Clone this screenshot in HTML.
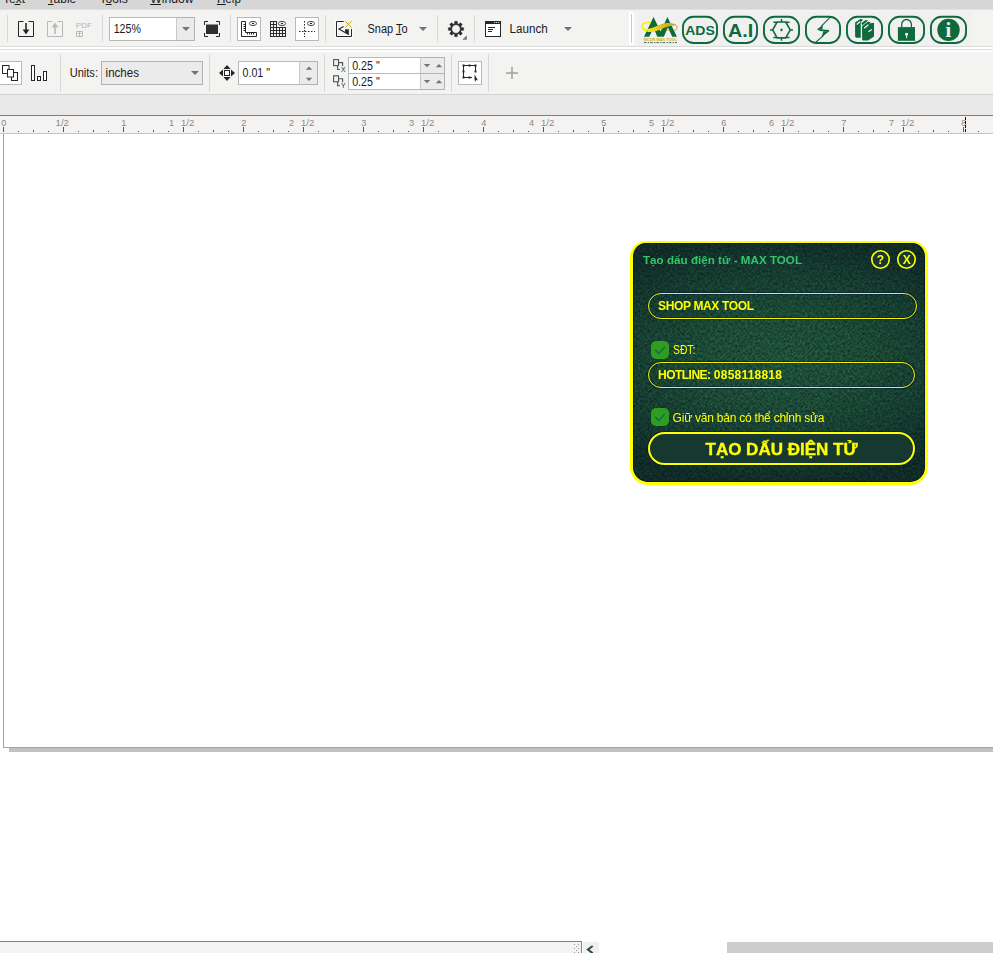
<!DOCTYPE html>
<html lang="vi"><head><meta charset="utf-8"><title>Tạo dấu điện tử - MAX TOOL</title>
<style>
html,body{margin:0;padding:0}
body{width:993px;height:953px;overflow:hidden;background:#fff;font-family:"Liberation Sans",sans-serif;color:#1a1a1a}
#app{position:relative;width:993px;height:953px;overflow:hidden;background:#fff}
#app div,#app span,#app svg{position:absolute;box-sizing:border-box}
svg text{font-family:"Liberation Sans",sans-serif}
.menubar{left:0;top:0;width:993px;height:9px;background:#d6d6d6}
.menuedge{left:0;top:9px;width:993px;height:1px;background:#dfdfde}
.tb1{left:0;top:10px;width:993px;height:36px;background:#f3f3f1}
.tb2{left:0;top:52px;width:993px;height:42px;background:#f3f3f1}
.ln{left:0;width:993px;height:1px}
.sep{width:1px;background:#d8d8d8}
.box{background:#fff;border:1px solid #b9b9b9}
.gbox{background:#ebebeb;border:1px solid #b3b3b3}
.band{left:0;top:95px;width:993px;height:20px;background:#e9e9e9}
.blue{left:0;top:115px;width:993px;height:1px;background:#0aa4ee}
.ruler{left:0;top:116px;width:993px;height:17px;background:#f4f3f1}
.rulerline{left:0;top:133px;width:993px;height:1px;background:#c6c6c6}
.page-left{left:3px;top:134px;width:1px;height:614px;background:#a3a3a3}
.page-bottom{left:3px;top:747px;width:990px;height:1px;background:#a3a3a3}
.page-shadow{left:9px;top:748px;width:984px;height:4px;background:#c1c1c1}
.tabs{left:0;top:941px;width:582px;height:12px;background:#f3f3f1;border-top:1px solid #7d8886;border-right:1px solid #7d8886}
.scrollbtn{left:583px;top:942px;width:16px;height:11px;background:#f0f0f0}
.thumb{left:727px;top:942px;width:266px;height:11px;background:#cdcdcd}
</style></head><body>
<div id="app">
<div class="menubar"></div><div class="menuedge"></div>
<div class="tb1"></div>
<div class="ln" style="top:46px;background:#dadada"></div><div class="ln" style="top:47px;height:2px;background:#fff"></div><div class="ln" style="top:49px;background:#dadada"></div><div class="ln" style="top:50px;height:2px;background:#fff"></div>
<div class="sep" style="left:7px;top:15px;height:27px"></div><div class="sep" style="left:102px;top:15px;height:27px"></div><div class="sep" style="left:230px;top:15px;height:27px"></div><div class="sep" style="left:325px;top:15px;height:27px"></div><div class="sep" style="left:437px;top:15px;height:27px"></div><div class="sep" style="left:474px;top:15px;height:27px"></div>
<div class="tb2"></div><div class="ln" style="top:94px;background:#d4d4d4"></div><div class="band"></div><div class="blue"></div>
<div class="sep" style="left:60px;top:54px;height:38px"></div><div class="sep" style="left:209px;top:54px;height:38px"></div><div class="sep" style="left:324px;top:54px;height:38px"></div><div class="sep" style="left:451px;top:54px;height:38px"></div><div class="sep" style="left:488px;top:54px;height:38px"></div>
<div class="ruler"></div><div class="rulerline"></div>
<div class="page-left"></div><div class="page-bottom"></div><div class="page-shadow"></div>
<div class="tabs"></div><div class="scrollbtn"></div><div class="thumb"></div>
<svg class="menu-text" style="left:0;top:0" width="993" height="10" viewBox="0 0 993 10"><text x="3" y="2.9" font-size="12" fill="#1a1a1a" textLength="22" lengthAdjust="spacingAndGlyphs">Text</text><text x="47.6" y="2.9" font-size="12" fill="#1a1a1a" textLength="28.6" lengthAdjust="spacingAndGlyphs">Table</text><text x="99.4" y="2.9" font-size="12" fill="#1a1a1a" textLength="28.3" lengthAdjust="spacingAndGlyphs">Tools</text><text x="150.2" y="2.9" font-size="12" fill="#1a1a1a" textLength="43.3" lengthAdjust="spacingAndGlyphs">Window</text><text x="216.9" y="2.9" font-size="12" fill="#1a1a1a" textLength="24" lengthAdjust="spacingAndGlyphs">Help</text><path d="M14.6 4.5H20.2 M48 4.5H53.6 M105.7 4.5H111.6 M150.2 4.5H160.9 M216.9 4.5H225.7" stroke="#1a1a1a" stroke-width="1" fill="none"/></svg>
<div class="box" style="left:109px;top:17px;width:86px;height:24px"></div><div class="gbox" style="left:176px;top:17px;width:19px;height:24px;border-left-color:#c9c9c9"></div><div class="box" style="left:237px;top:17px;width:24px;height:24px"></div><div class="box" style="left:295px;top:17px;width:24px;height:24px"></div>
<div style="left:629px;top:12px;width:5px;height:33px;background:#fff"></div><div style="left:631px;top:14px;width:1px;height:29px;background:#cbcbcb"></div><div style="left:638px;top:12px;width:334px;height:34px;background:#f0f0f0"></div>
<svg class="tb1-icons" style="left:0;top:10px" width="993" height="36" viewBox="0 10 993 36"><path d="M23.5 21.5H18.5V36.5H33.5V21.5H28.5" fill="none" stroke="#262626" stroke-width="1"/><path d="M26 23V32" stroke="#262626" stroke-width="1.6" fill="none"/><path d="M22.6 29.6H29.4L26 34.4Z" fill="#262626"/><path d="M52.5 21.5H47.5V36.5H62.5V21.5H57.5" fill="none" stroke="#b9b9b9" stroke-width="1"/><path d="M55 34V25" stroke="#b9b9b9" stroke-width="1.6" fill="none"/><path d="M51.6 27.4H58.4L55 22.6Z" fill="#b9b9b9"/><text x="75.8" y="27.6" font-size="7.2" fill="#b4b4b4" textLength="16" lengthAdjust="spacingAndGlyphs">PDF</text><path d="M76.5 31.5H82.5V36.5H76.5Z M79.5 36V32.5 M77.8 34L79.5 32.3L81.2 34" fill="none" stroke="#b9b9b9" stroke-width="1"/><text x="113.7" y="32.8" font-size="12" fill="#1a1a1a" textLength="27.3" lengthAdjust="spacingAndGlyphs">125%</text><path d="M182.0 27.0 L190.0 27.0 L186 31.0 Z" fill="#75717b"/><rect x="206" y="24.5" width="12" height="9.5" fill="#2f2f2f"/><path d="M204.5 25V21.5H208 M216 21.5H219.5V25 M219.5 33V36.5H216 M208 36.5H204.5V33" fill="none" stroke="#262626" stroke-width="1"/><path d="M241.5 21.5H245.5V32.5H256.5V36.5H241.5Z" fill="#fff" stroke="#262626" stroke-width="1"/><path d="M243.5 24.5H245 M243.5 26.5H245 M243.5 28.5H245 M243.5 30.5H245 M247.5 33V34.5 M249.5 33V34.5 M251.5 33V34.5 M253.5 33V34.5" stroke="#262626" stroke-width="1" fill="none"/><ellipse cx="253" cy="23.5" rx="3.6" ry="2.1" fill="#fdfdfd" stroke="#3a3a3a" stroke-width="0.9"/><ellipse cx="253" cy="23.5" rx="1.2" ry="0.8" fill="#222"/><path d="M270 21.5H277M270 24.5H277M270 27.5H286M270 30.5H286M270 33.5H286M270 36.5H286M270.5 21V37M273.5 21V37M276.5 21V37M279.5 27V37M282.5 27V37M285.5 27V37" fill="none" stroke="#2b2b2b" stroke-width="1"/><ellipse cx="282" cy="23.5" rx="3.6" ry="2.1" fill="#fdfdfd" stroke="#3a3a3a" stroke-width="0.9"/><ellipse cx="282" cy="23.5" rx="1.2" ry="0.8" fill="#222"/><path d="M304.5 21V37" stroke="#262626" stroke-width="1" stroke-dasharray="1.5 1.5" fill="none"/><path d="M299 31.5H315" stroke="#262626" stroke-width="1" stroke-dasharray="1.5 1.5" fill="none"/><ellipse cx="311" cy="23.5" rx="3.6" ry="2.1" fill="#fdfdfd" stroke="#3a3a3a" stroke-width="0.9"/><ellipse cx="311" cy="23.5" rx="1.2" ry="0.8" fill="#222"/><path d="M343.8 21.5H336.5V36.5H351.5V29" fill="none" stroke="#fff" stroke-width="2.6" opacity="0.8"/><path d="M343.8 21.5H336.5V36.5H351.5V29" fill="none" stroke="#262626" stroke-width="1"/><path d="M343.6 26.4L338.9 28.9L348.7 34.6" fill="none" stroke="#262626" stroke-width="1.1"/><path d="M345.1 29.2H348.8V34.7L345.1 32.5Z" fill="#262626"/><path d="M345.2 21.3L351.6 27.5 M351.6 21.3L345.2 27.5" stroke="#c9a50c" stroke-width="1" fill="none"/><text x="367.5" y="32.8" font-size="12" fill="#1a1a1a" textLength="40" lengthAdjust="spacingAndGlyphs">Snap <tspan text-decoration="underline">T</tspan>o</text><path d="M419.0 27.0 L427.0 27.0 L423 31.0 Z" fill="#75717b"/><path d="M454.43 23.73 L454.76 21.30 L457.24 21.30 L457.57 23.73 L458.61 24.16 L460.57 22.68 L462.32 24.43 L460.84 26.39 L461.27 27.43 L463.70 27.76 L463.70 30.24 L461.27 30.57 L460.84 31.61 L462.32 33.57 L460.57 35.32 L458.61 33.84 L457.57 34.27 L457.24 36.70 L454.76 36.70 L454.43 34.27 L453.39 33.84 L451.43 35.32 L449.68 33.57 L451.16 31.61 L450.73 30.57 L448.30 30.24 L448.30 27.76 L450.73 27.43 L451.16 26.39 L449.68 24.43 L451.43 22.68 L453.39 24.16Z M456 24.8 a4.2 4.2 0 1 0 0.01 0Z" fill="#2b2b2b" fill-rule="evenodd" stroke="#2b2b2b" stroke-width="0.4" stroke-linejoin="round"/><path d="M466.8 35.3V39.8H462.4Z" fill="#76727c"/><rect x="485.5" y="21.5" width="15" height="15" fill="#fff" stroke="#262626" stroke-width="1"/><rect x="485" y="21" width="16" height="3" fill="#262626"/><path d="M494.2 22.5h1 M496.2 22.5h1 M498.2 22.5h1" stroke="#fff" stroke-width="1"/><path d="M488 27.5H495 M488 29.5H493 M488 31.5H492" stroke="#262626" stroke-width="1" fill="none"/><text x="509.5" y="32.8" font-size="12" fill="#1a1a1a" textLength="38.2" lengthAdjust="spacingAndGlyphs">Launch</text><path d="M564.0 27.0 L572.0 27.0 L568 31.0 Z" fill="#75717b"/></svg>
<div class="box" style="left:-3px;top:61px;width:25px;height:24px"></div><div class="gbox" style="left:101px;top:61px;width:102px;height:24px"></div><div class="box" style="left:238px;top:61px;width:80px;height:24px"></div><div class="gbox" style="left:299px;top:61px;width:19px;height:24px;border-left-color:#c9c9c9"></div><div class="box" style="left:348px;top:57px;width:97px;height:17px"></div><div class="box" style="left:348px;top:73px;width:97px;height:17px"></div><div class="gbox" style="left:420px;top:57px;width:25px;height:17px;border-left-color:#c9c9c9"></div><div class="gbox" style="left:420px;top:73px;width:25px;height:17px;border-left-color:#c9c9c9"></div><div class="box" style="left:458px;top:61px;width:24px;height:24px"></div>
<svg class="tb2-icons" style="left:0;top:52px" width="993" height="42" viewBox="0 52 993 42"><rect x="2.5" y="65.5" width="6.5" height="8" fill="#fff" stroke="#262626"/><rect x="11.5" y="72.5" width="6" height="8" fill="#fff" stroke="#262626"/><rect x="7.5" y="69.5" width="6" height="7.5" fill="#fff" stroke="#262626"/><rect x="31.5" y="65.5" width="3" height="15" fill="#fff" stroke="#262626"/><rect x="37.5" y="76.5" width="3" height="4" fill="#fff" stroke="#262626"/><rect x="43.5" y="71.5" width="3" height="9" fill="#fff" stroke="#262626"/><text x="69.7" y="76.9" font-size="12" fill="#1a1a1a" textLength="28.3" lengthAdjust="spacingAndGlyphs">Units:</text><text x="105.6" y="76.9" font-size="12" fill="#1a1a1a" textLength="33.4" lengthAdjust="spacingAndGlyphs">inches</text><path d="M191.0 71.0 L199.0 71.0 L195 75.0 Z" fill="#75717b"/><rect x="224.5" y="70.5" width="5" height="5" fill="#fff" stroke="#262626"/><path d="M227 65L230.6 69H223.4Z M227 81L230.6 77H223.4Z M219 73L223 69.4V76.6Z M235 73L231 69.4V76.6Z" fill="#262626"/><text x="242.5" y="76.9" font-size="12" fill="#1a1a1a" textLength="27.5" lengthAdjust="spacingAndGlyphs">0.01 "</text><path d="M305.8 69.85000000000001 L312.2 69.85000000000001 L309 66.55 Z" fill="#75717b"/><path d="M305.8 77.75 L312.2 77.75 L309 81.05000000000001 Z" fill="#75717b"/><rect x="333.6" y="59.6" width="4.9" height="6" fill="none" stroke="#4a5a54" stroke-width="1.1"/><path d="M338.5 62.6H342.6V66 M337.6 65.6V69.5H340" fill="none" stroke="#4a5a54" stroke-width="1.1"/><rect x="333.6" y="75.8" width="4.9" height="6" fill="none" stroke="#4a5a54" stroke-width="1.1"/><path d="M338.5 78.8H342.6V82.2 M337.6 81.8V85.7H340" fill="none" stroke="#4a5a54" stroke-width="1.1"/><text x="341" y="71.6" font-size="6.8" fill="#262626">X</text><text x="341.1" y="87.9" font-size="6.8" fill="#262626">Y</text><text x="352.2" y="69.8" font-size="12" fill="#1a1a1a" textLength="27.5" lengthAdjust="spacingAndGlyphs">0.25 "</text><text x="352.2" y="86" font-size="12" fill="#1a1a1a" textLength="27.5" lengthAdjust="spacingAndGlyphs">0.25 "</text><path d="M423.8 63.949999999999996 L430.2 63.949999999999996 L427 67.25 Z" fill="#75717b"/><path d="M435.8 67.25 L442.2 67.25 L439 63.949999999999996 Z" fill="#75717b"/><path d="M423.8 79.94999999999999 L430.2 79.94999999999999 L427 83.25 Z" fill="#75717b"/><path d="M435.8 83.25 L442.2 83.25 L439 79.94999999999999 Z" fill="#75717b"/><path d="M463.5 66V77.5H472 M463.5 65.5H475.5V72" fill="none" stroke="#262626" stroke-width="1"/><rect x="462.5" y="64.5" width="2" height="2" fill="#262626"/><rect x="468.5" y="64.5" width="2" height="2" fill="#262626"/><rect x="474.5" y="64.5" width="2" height="2" fill="#262626"/><rect x="462.5" y="70.5" width="2" height="2" fill="#262626"/><rect x="474.5" y="70.5" width="2" height="2" fill="#262626"/><rect x="462.5" y="76.5" width="2" height="2" fill="#262626"/><rect x="468.5" y="76.5" width="2" height="2" fill="#262626"/><path d="M474.6 74.4L478 80.4L476.2 79.8L475.4 81.8L474.6 80Z" fill="#262626"/><path d="M506 73H518 M512 67V79" stroke="#a3a3a3" stroke-width="1.6" fill="none"/></svg>
<svg class="ruler-marks" style="left:0;top:116px" width="993" height="18" viewBox="0 116 993 18"><path d="M3.5 127V132M63.5 127V132M123.5 127V132M183.5 127V132M243.5 127V132M303.5 127V132M363.5 127V132M423.5 127V132M483.5 127V132M543.5 127V132M603.5 127V132M663.5 127V132M723.5 127V132M783.5 127V132M843.5 127V132M903.5 127V132M963.5 127V132M33.5 130V132M93.5 130V132M153.5 130V132M213.5 130V132M273.5 130V132M333.5 130V132M393.5 130V132M453.5 130V132M513.5 130V132M573.5 130V132M633.5 130V132M693.5 130V132M753.5 130V132M813.5 130V132M873.5 130V132M933.5 130V132M993.5 130V132M18.5 131V132M48.5 131V132M78.5 131V132M108.5 131V132M138.5 131V132M168.5 131V132M198.5 131V132M228.5 131V132M258.5 131V132M288.5 131V132M318.5 131V132M348.5 131V132M378.5 131V132M408.5 131V132M438.5 131V132M468.5 131V132M498.5 131V132M528.5 131V132M558.5 131V132M588.5 131V132M618.5 131V132M648.5 131V132M678.5 131V132M708.5 131V132M738.5 131V132M768.5 131V132M798.5 131V132M828.5 131V132M858.5 131V132M888.5 131V132M918.5 131V132M948.5 131V132M978.5 131V132" stroke="#525a58" stroke-width="1" fill="none"/><text x="3.8" y="125.8" font-size="9.2" fill="#8c8984" text-anchor="middle">0</text><text x="55.6" y="125.8" font-size="9.2" fill="#8c8984" textLength="13.3" lengthAdjust="spacingAndGlyphs">1/2</text><text x="123.8" y="125.8" font-size="9.2" fill="#8c8984" text-anchor="middle">1</text><text x="174.2" y="125.8" font-size="9.2" fill="#8c8984" text-anchor="end">1</text><text x="181.0" y="125.8" font-size="9.2" fill="#8c8984" textLength="13.3" lengthAdjust="spacingAndGlyphs">1/2</text><text x="243.8" y="125.8" font-size="9.2" fill="#8c8984" text-anchor="middle">2</text><text x="294.2" y="125.8" font-size="9.2" fill="#8c8984" text-anchor="end">2</text><text x="301.0" y="125.8" font-size="9.2" fill="#8c8984" textLength="13.3" lengthAdjust="spacingAndGlyphs">1/2</text><text x="363.8" y="125.8" font-size="9.2" fill="#8c8984" text-anchor="middle">3</text><text x="414.2" y="125.8" font-size="9.2" fill="#8c8984" text-anchor="end">3</text><text x="421.0" y="125.8" font-size="9.2" fill="#8c8984" textLength="13.3" lengthAdjust="spacingAndGlyphs">1/2</text><text x="483.8" y="125.8" font-size="9.2" fill="#8c8984" text-anchor="middle">4</text><text x="534.2" y="125.8" font-size="9.2" fill="#8c8984" text-anchor="end">4</text><text x="541.0" y="125.8" font-size="9.2" fill="#8c8984" textLength="13.3" lengthAdjust="spacingAndGlyphs">1/2</text><text x="603.8" y="125.8" font-size="9.2" fill="#8c8984" text-anchor="middle">5</text><text x="654.2" y="125.8" font-size="9.2" fill="#8c8984" text-anchor="end">5</text><text x="661.0" y="125.8" font-size="9.2" fill="#8c8984" textLength="13.3" lengthAdjust="spacingAndGlyphs">1/2</text><text x="723.8" y="125.8" font-size="9.2" fill="#8c8984" text-anchor="middle">6</text><text x="774.2" y="125.8" font-size="9.2" fill="#8c8984" text-anchor="end">6</text><text x="781.0" y="125.8" font-size="9.2" fill="#8c8984" textLength="13.3" lengthAdjust="spacingAndGlyphs">1/2</text><text x="843.8" y="125.8" font-size="9.2" fill="#8c8984" text-anchor="middle">7</text><text x="894.2" y="125.8" font-size="9.2" fill="#8c8984" text-anchor="end">7</text><text x="901.0" y="125.8" font-size="9.2" fill="#8c8984" textLength="13.3" lengthAdjust="spacingAndGlyphs">1/2</text><text x="963.8" y="125.8" font-size="9.2" fill="#8c8984" text-anchor="middle">8</text><path d="M965.5 117V133" stroke="#111" stroke-width="1" stroke-dasharray="3 1" fill="none"/></svg>
<svg class="maxtool-bar" style="left:638px;top:11px" width="334" height="35" viewBox="638 11 334 35"><path d="M644 36.8 L653.5 17 L660.6 31.6 L667.4 17 L676.9 36.8 L672.3 36.8 L667.9 27.6 L663.8 36.8 L657.3 36.8 L653.6 27.7 L649.2 36.8 Z" fill="#0e6a3c"/><defs><linearGradient id="gold" gradientUnits="userSpaceOnUse" x1="642" y1="0" x2="677" y2="0"><stop offset="0" stop-color="#fff500"/><stop offset="0.3" stop-color="#f0e010"/><stop offset="0.6" stop-color="#d9bd18"/><stop offset="1" stop-color="#c59a2a"/></linearGradient></defs><path d="M644.2 30 C646.5 32.6 652 32.6 656.5 31 C661 29.2 664.6 27.2 668.4 26.4 C671.4 25.8 674 25.6 675.6 25 C674 23.2 670 22.8 666.6 23 C662.4 23.4 658.6 25.2 654.6 27 C650.8 28.6 647 29.4 644.2 28.4 Z" fill="url(#gold)"/><path d="M645.4 30.6 C642.6 29.6 641.6 27 642.6 24.8 C643.8 22.6 647.4 22.2 651 22.6" fill="none" stroke="#f7ee0c" stroke-width="1.3"/><path d="M674.6 24.4 C676.8 25.2 677.6 27 676.6 28.8 C676 29.8 675 30.6 674.2 31" fill="none" stroke="#c9a22a" stroke-width="1"/><path d="M666.2 30.4H668.6" stroke="#d0b020" stroke-width="0.9"/><text x="643.8" y="40.9" font-size="3.9" fill="#c8b218" textLength="33" lengthAdjust="spacingAndGlyphs" font-weight="bold">MCDR.MAX.TOOL</text><path d="M644 42.6H677" stroke="#2f5f45" stroke-width="0.9" stroke-dasharray="2.6 1.2 1.4 1" fill="none"/><rect x="682.95" y="16.8" width="34.1" height="26.2" rx="10.5" ry="10.5" fill="none" stroke="#0e6a3c" stroke-width="1.9"/><rect x="723.95" y="16.8" width="33.1" height="26.2" rx="10.5" ry="10.5" fill="none" stroke="#0e6a3c" stroke-width="1.9"/><rect x="763.95" y="16.8" width="35.1" height="26.2" rx="10.5" ry="10.5" fill="none" stroke="#0e6a3c" stroke-width="1.9"/><rect x="805.95" y="16.8" width="34.1" height="26.2" rx="10.5" ry="10.5" fill="none" stroke="#0e6a3c" stroke-width="1.9"/><rect x="846.95" y="16.8" width="35.1" height="26.2" rx="10.5" ry="10.5" fill="none" stroke="#0e6a3c" stroke-width="1.9"/><rect x="888.95" y="16.8" width="35.1" height="26.2" rx="10.5" ry="10.5" fill="none" stroke="#0e6a3c" stroke-width="1.9"/><rect x="930.95" y="16.8" width="35.1" height="26.2" rx="10.5" ry="10.5" fill="none" stroke="#0e6a3c" stroke-width="1.9"/><text x="685.2" y="34.8" font-size="13.6" fill="#0e6a3c" textLength="29.6" lengthAdjust="spacingAndGlyphs" font-weight="bold">ADS</text><text x="728" y="36.8" font-size="19" fill="#0e6a3c" textLength="25.2" lengthAdjust="spacingAndGlyphs" font-weight="bold">A.I</text><path d="M777.1 22H785.7L790.2 29.9L785.7 37.9H777.1L772.7 29.9Z" fill="none" stroke="#0e6a3c" stroke-width="1.6" stroke-linejoin="round"/><path d="M781.5 19V22 M781.5 38V40.8 M770 29.9H772.7 M790.2 29.9H793 M777.1 22.3H773.4 M785.7 22.3H789.6 M777.1 37.6H773.4 M785.7 37.6H789.6" stroke="#0e6a3c" stroke-width="1.5" fill="none"/><path d="M781.5 28.2L783 29.9L781.5 31.6L780 29.9Z" fill="#0e6a3c"/><path d="M823 24.8 L816.9 29.6 L822.4 29.4 Z" fill="#0e6a3c"/><path d="M830.4 17.2 L821.6 25.8" stroke="#0e6a3c" stroke-width="1.1" fill="none"/><path d="M816.9 28.9 L829 30.1 L829.1 31.8 L819.8 31.1 Z" fill="#0e6a3c"/><path d="M829.1 31.2 L821.4 37.4 L823.4 31.2 Z" fill="#0e6a3c"/><path d="M816.1 42 L823.4 35.6" stroke="#0e6a3c" stroke-width="1.1" fill="none"/><path d="M855.1 22.4 L860.4 18.9 L863 19.5 L860.8 22.4 L860.8 37.8 L856.2 37.8 L855.1 36.6 Z" fill="#0e6a3c"/><path d="M860.9 23.6 L865.6 19.9 L868 20.6 L862.6 25.2 Z" fill="#0e6a3c"/><path d="M862.1 26.2 L868.2 21.6 L870.7 22.4 L869.4 23.6 L874 22.8 L874 36.6 L868 40.6 L863 40.6 L862.1 39.6 Z" fill="#0e6a3c"/><path d="M856.8 24.4 L860.2 21.6" stroke="#f0f0f0" stroke-width="1.3" fill="none"/><path d="M864.2 28.2 L868.4 24.8" stroke="#f0f0f0" stroke-width="1.4" fill="none"/><path d="M868.4 31.8 L871.8 29.6" stroke="#f0f0f0" stroke-width="1.2" fill="none"/><path d="M861.4 23.4V39" stroke="#f0f0f0" stroke-width="0.8" fill="none"/><rect x="897.9" y="27.1" width="17.1" height="13.7" fill="#0e6a3c"/><path d="M901.7 27.2V24.6a4.85 5.1 0 0 1 9.7 0V27.2" fill="none" stroke="#0e6a3c" stroke-width="1.3"/><path d="M905.2 33h2.8v2.4h-0.9v2.8h-1v-2.8h-0.9Z" fill="#f0f0f0"/><circle cx="948.5" cy="29.9" r="11.2" fill="#0e6a3c"/><text x="948.4" y="37.2" style="font-family:'Liberation Serif',serif" font-size="20.5" font-weight="bold" fill="#f0f0f0" text-anchor="middle">i</text></svg>
<style>
.dlg{left:630px;top:241px;width:298px;height:244px;border:3px solid #ffff00;border-top-width:2px;border-radius:16px 16px 18px 18px;overflow:hidden;isolation:isolate;
background:radial-gradient(ellipse 76% 52% at 50% 49%, #1d4f39 0%, #1a4935 38%, #143b2f 72%, #0f2b27 100%);}
.dlg .hatch{left:0;top:0;width:292px;height:239px;mix-blend-mode:overlay;background:repeating-linear-gradient(135deg, #747474 0px, #747474 1px, #858585 1.5px, #858585 2.83px)}
.dlg .inner{left:0;top:0;width:292px;height:239px;border-radius:13px 13px 15px 15px;box-shadow:inset 0 0 0 1px rgba(0,20,45,.75)}
.dlg span{white-space:nowrap;line-height:14px;height:14px;font-size:12px;color:#ffff00}
.dlg .title{left:10px;top:10.3px;font-size:11.6px;font-weight:bold;color:#33c76c;letter-spacing:0.03px}
.dlg .circ{width:19px;height:19px;border-radius:50%;background:#17382f}
.dlg .circ span{left:0;width:19px;text-align:center;top:3.3px;font-weight:bold}
.dlg .inp{left:15px;width:269px;height:26px;border:1px solid #f2f20a;border-radius:13px;box-shadow:0 0 0 1px rgba(0,20,45,.45), inset 0 0 0 1px rgba(0,20,45,.35)}
.dlg .inp span{left:9px;top:5px;font-weight:bold}
.dlg .chk{left:18px;width:18px;height:18px;border-radius:5px;background:#2f9d1f}
.dlg .lbl{left:39.6px}
.dlg .btn{left:15px;top:189px;width:267px;height:33px;border:2px solid #ffff00;border-radius:16.5px;background:#17382f;box-shadow:0 0 0 1px rgba(0,20,45,.5)}
.dlg .btn span{left:0;width:263px;text-align:center;-webkit-text-stroke:0.35px #ffff00;top:6px;height:20px;line-height:20px;font-size:17px;font-weight:bold}
</style>
<div class="dlg"><svg class="noise" style="left:0;top:0;mix-blend-mode:overlay" width="292" height="239"><filter id="nz" x="0" y="0" width="100%" height="100%" color-interpolation-filters="sRGB"><feTurbulence type="fractalNoise" baseFrequency="0.4" numOctaves="3" seed="7"/><feColorMatrix type="matrix" values="0.5 0 0 0 0.25  0.5 0 0 0 0.25  0.5 0 0 0 0.25  0 0 0 0 1"/></filter><rect width="292" height="239" filter="url(#nz)"/></svg><div class="hatch"></div><div class="inner"></div>
<span class="title">Tạo dấu điện tử - MAX TOOL</span>
<div class="circ" style="left:238.0px;top:6.9px"><svg style="left:0;top:0" width="19" height="19"><circle cx="9.5" cy="9.5" r="8.7" fill="none" stroke="#ffff00" stroke-width="1.6"/></svg><span>?</span></div><div class="circ" style="left:264.2px;top:6.9px"><svg style="left:0;top:0" width="19" height="19"><circle cx="9.5" cy="9.5" r="8.7" fill="none" stroke="#ffff00" stroke-width="1.6"/></svg><span>X</span></div>
<div class="inp" style="top:50px"><span style="letter-spacing:-0.35px">SHOP MAX TOOL</span></div>
<div class="chk" style="top:98px"><svg style="left:0;top:0" width="18" height="18"><path d="M4.2 8.7L7.8 12.6L13.8 6" fill="none" stroke="#176a4e" stroke-width="1.5"/></svg></div><span class="lbl" style="top:99.6px;transform:scaleX(0.86);transform-origin:0 50%">SĐT:</span>
<div class="inp" style="top:119px;width:267px"><span><b style="font-weight:bold;letter-spacing:-0.52px">HOTLINE:</b> <b style="font-weight:bold;letter-spacing:0.22px">0858118818</b></span></div>
<div class="chk" style="top:165px"><svg style="left:0;top:0" width="18" height="18"><path d="M4.2 8.7L7.8 12.6L13.8 6" fill="none" stroke="#176a4e" stroke-width="1.5"/></svg></div><span class="lbl" style="top:167.7px;letter-spacing:-0.23px">Giữ văn bản có thể chỉnh sửa</span>
<div class="btn"><span>TẠO DẤU ĐIỆN TỬ</span></div>
</div>
<svg class="bottom-marks" style="left:560px;top:940px" width="60" height="13" viewBox="560 940 60 13"><rect x="574" y="944" width="1" height="1" fill="#9b9b9b"/><rect x="578" y="944" width="1" height="1" fill="#9b9b9b"/><rect x="576" y="946" width="1" height="1" fill="#9b9b9b"/><rect x="574" y="948" width="1" height="1" fill="#9b9b9b"/><rect x="578" y="948" width="1" height="1" fill="#9b9b9b"/><rect x="576" y="950" width="1" height="1" fill="#9b9b9b"/><rect x="574" y="952" width="1" height="1" fill="#9b9b9b"/><rect x="578" y="952" width="1" height="1" fill="#9b9b9b"/><path d="M592.7 946L588 949.5L592.7 953.2" fill="none" stroke="#2c4a41" stroke-width="2.1"/></svg>
</div>
</body></html>
